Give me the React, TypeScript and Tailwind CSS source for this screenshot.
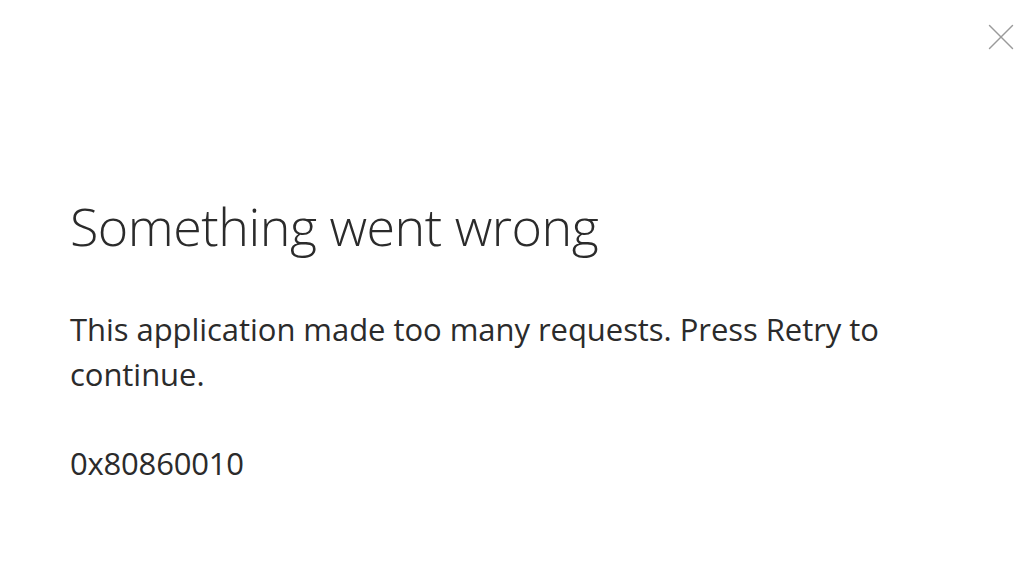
import { X } from 'lucide-react';

export default function App() {
  return (
    <div
      className="relative h-[576px] w-[1024px] overflow-hidden bg-white text-[#2b2b2b]"
      style={{ fontFamily: '"Open Sans", "Noto Sans", sans-serif' }}
    >
      <button className="absolute right-0 top-[14px] text-[#9a9a9a]" title="Close">
        <X size={46} strokeWidth={0.75} />
      </button>

      <div className="pl-[70px] pt-[190px]">
        <h1 className="text-[52px] font-[350] leading-[72px] tracking-[-0.5px]">Something went wrong</h1>
        <p className="mt-[45px] w-[850px] text-[31px] leading-[45px] tracking-[-0.05px]">
          This application made too many requests. Press Retry to continue.
        </p>
        <p className="mt-[44px] text-[31px] leading-[45px] tracking-[-0.2px]">0x80860010</p>
      </div>
    </div>
  );
}
